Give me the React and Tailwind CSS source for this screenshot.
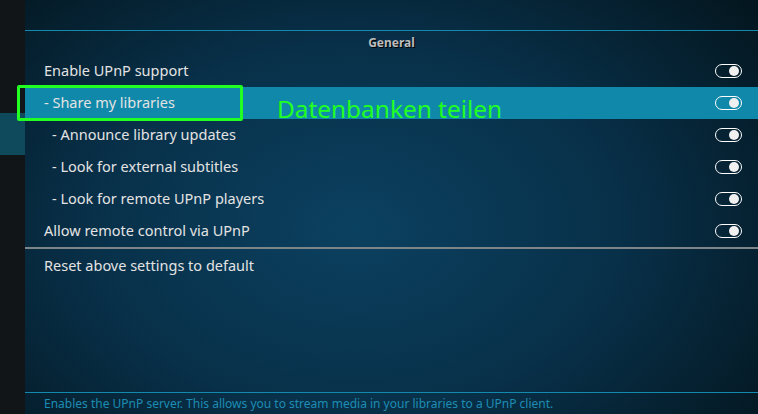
import React from "react";

function Toggle() {
  return (
    <div className="w-[27px] h-[14px] rounded-full border-[1.5px] border-white flex items-center justify-end pr-[2px]">
      <div className="w-[10px] h-[10px] rounded-full bg-[#f0f0f0]" />
    </div>
  );
}

function Row({ label, indent, active, toggle = true }) {
  return (
    <div
      className={
        "h-[32px] flex items-center justify-between pr-[16px] " +
        (active ? "bg-[#1088aa] " : "") +
        (indent ? "pl-[27px]" : "pl-[19px]")
      }
    >
      <span className="text-[14.5px] text-[#e3e3e3]">{label}</span>
      {toggle && <Toggle />}
    </div>
  );
}

export default function App() {
  return (
    <div className="w-[758px] h-[414px] flex overflow-hidden relative font-['Noto_Sans',sans-serif]">
      <div className="w-[25px] h-full bg-[#121517] flex flex-col">
        <div className="h-[113px]" />
        <div className="h-[42px] bg-[#0f4a5c]" />
      </div>
      <div className="flex-1 h-full flex flex-col bg-[radial-gradient(ellipse_90%_110%_at_45%_55%,#0b4160_0%,#083049_40%,#041822_75%,#01080c_100%)]">
        <div className="h-[30px]" />
        <div className="h-px bg-[#1389ad]" />
        <div className="h-[24px] flex items-center justify-center">
          <span className="text-[12px] font-bold text-[#bdbdbd] [text-shadow:1px_1px_0_#000]">General</span>
        </div>
        <Row label="Enable UPnP support" />
        <Row label="- Share my libraries" active />
        <Row label="- Announce library updates" indent />
        <Row label="- Look for external subtitles" indent />
        <Row label="- Look for remote UPnP players" indent />
        <Row label="Allow remote control via UPnP" />
        <div className="h-[2px] bg-[#7d8589]" />
        <div className="h-[33px] flex items-center pl-[19px]">
          <span className="text-[14.5px] text-[#e3e3e3]">Reset above settings to default</span>
        </div>
        <div className="flex-1" />
        <div className="h-px bg-[#1389ad]" />
        <div className="h-[21px] flex items-center pl-[19px]">
          <span className="text-[12px] text-[#1d8db3]">
            Enables the UPnP server. This allows you to stream media in your libraries to a UPnP client.
          </span>
        </div>
      </div>
      <div className="absolute left-[17px] top-[85px] w-[226px] h-[36px] border-[3px] border-[#22ff22] rounded-[2px]" />
      <div className="absolute left-[277px] top-[93px] text-[24.4px] leading-[32px] text-[#22ff22]">
        Datenbanken teilen
      </div>
    </div>
  );
}
